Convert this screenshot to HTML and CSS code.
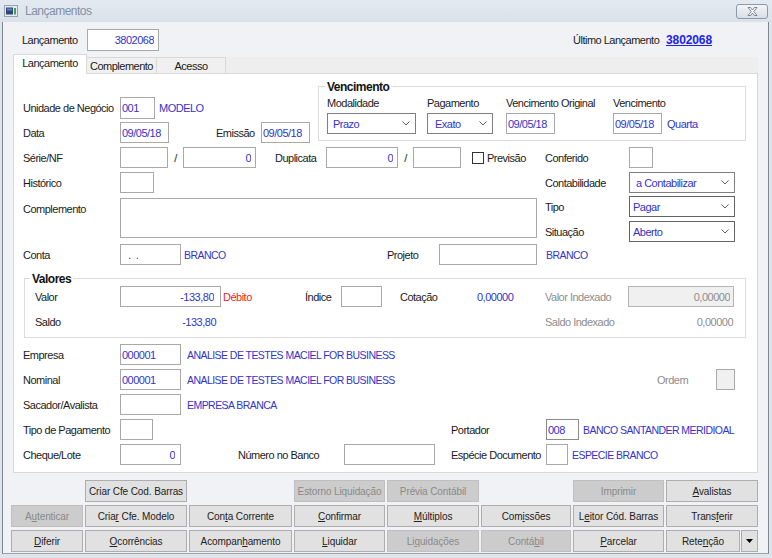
FILE: index.html
```html
<!DOCTYPE html>
<html lang="pt-BR">
<head>
<meta charset="utf-8">
<title>Lançamentos</title>
<link rel="stylesheet" href="styles.css">
</head>
<body>
<div class="window">
  <div class="titlebar">
    <svg class="app-icon" width="14" height="12" viewBox="0 0 14 12"><rect x="0.5" y="0.5" width="13" height="11" fill="#e6ebf1" stroke="#97a1ad"/><rect x="2" y="2.5" width="7" height="7" fill="#2b4677"/><rect x="3" y="3.5" width="5" height="2" fill="#6c86b0"/><rect x="10" y="3" width="2" height="6.5" fill="#3c9f63"/></svg>
    <span class="title">Lançamentos</span>
    <button class="close-btn" type="button"><svg width="11" height="9" viewBox="0 0 11 9"><path d="M1 0.5H3.6L5.5 3.1L7.4 0.5H10L6.8 4.5L10 8.5H7.4L5.5 5.9L3.6 8.5H1L4.2 4.5Z" fill="#fff" stroke="#5f6b7a" stroke-width="0.8"/></svg></button>
  </div>
  <div class="client">
    <div class="header">
      <span class="hdr-label">Lançamento</span>
      <input class="fld num w72 h22" type="text" value="3802068">
      <span class="last-label">Último Lançamento</span>
      <a class="last-link" href="#">3802068</a>
    </div>
    <div class="tabs">
      <div class="tab active">Lançamento</div>
      <div class="tab">Complemento</div>
      <div class="tab">Acesso</div>
      <div class="tab-fill"></div>
    </div>
    <div class="panel">
      <div class="top">
        <div class="top-left">
          <div class="row first">
            <span class="lbl">Unidade de Negócio</span>
            <input class="fld w35 h22" type="text" value="001">
            <span class="val ml4">MODELO</span>
          </div>
          <div class="row mt3">
            <span class="lbl">Data</span>
            <input class="fld w49" type="text" value="09/05/18">
            <span class="lbl-emissao">Emissão</span>
            <input class="fld w49" type="text" value="09/05/18">
          </div>
        </div>
        <div class="group venc">
          <div class="legend">Vencimento</div>
          <div class="venc-grid">
            <span>Modalidade</span>
            <span>Pagamento</span>
            <span>Vencimento Original</span>
            <span>Vencimento</span>
            <div class="combo w89 pl5"><span>Prazo</span><svg class="chev" width="8" height="5" viewBox="0 0 8 5"><path d="M0.5 0.5L4 4L7.5 0.5" fill="none" stroke="#606060"/></svg></div>
            <div class="combo w66 pl7"><span>Exato</span><svg class="chev" width="8" height="5" viewBox="0 0 8 5"><path d="M0.5 0.5L4 4L7.5 0.5" fill="none" stroke="#606060"/></svg></div>
            <input class="fld w49" type="text" value="09/05/18">
            <div class="venc-last"><input class="fld w49" type="text" value="09/05/18"><span class="val">Quarta</span></div>
          </div>
        </div>
      </div>

      <div class="mid">
        <div class="mid-left">
          <div class="row">
            <span class="lbl">Série/NF</span>
            <input class="fld w48" type="text" value="">
            <span class="slash">/</span>
            <input class="fld num w73" type="text" value="0">
            <span class="lbl-dup">Duplicata</span>
            <input class="fld num w72" type="text" value="0">
            <span class="slash">/</span>
            <input class="fld w48" type="text" value="">
            <span class="check"></span>
            <span class="check-lbl">Previsão</span>
          </div>
          <div class="row mt4">
            <span class="lbl">Histórico</span>
            <input class="fld w34" type="text" value="">
          </div>
          <div class="row-tall">
            <span class="lbl lbl-top">Complemento</span>
            <textarea class="memo"></textarea>
          </div>
        </div>
        <div class="mid-right">
          <div class="row">
            <span class="lbl-r">Conferido</span>
            <input class="fld w24" type="text" value="">
          </div>
          <div class="row mt4">
            <span class="lbl-r">Contabilidade</span>
            <div class="combo w106 pl6"><span>a Contabilizar</span><svg class="chev" width="8" height="5" viewBox="0 0 8 5"><path d="M0.5 0.5L4 4L7.5 0.5" fill="none" stroke="#606060"/></svg></div>
          </div>
          <div class="row mt3">
            <span class="lbl-r">Tipo</span>
            <div class="combo dark w106 pl3"><span>Pagar</span><svg class="chev" width="8" height="5" viewBox="0 0 8 5"><path d="M0.5 0.5L4 4L7.5 0.5" fill="none" stroke="#606060"/></svg></div>
          </div>
          <div class="row mt4">
            <span class="lbl-r">Situação</span>
            <div class="combo dark w106 pl3"><span>Aberto</span><svg class="chev" width="8" height="5" viewBox="0 0 8 5"><path d="M0.5 0.5L4 4L7.5 0.5" fill="none" stroke="#606060"/></svg></div>
          </div>
        </div>
      </div>

      <div class="row conta">
        <span class="lbl">Conta</span>
        <input class="fld w61 pad-dots" type="text" value=".  .">
        <span class="val caps conta-desc">BRANCO</span>
        <span class="lbl-proj">Projeto</span>
        <input class="fld w98" type="text" value="">
        <span class="val caps ml9">BRANCO</span>
      </div>

      <div class="group valores">
        <div class="legend">Valores</div>
        <div class="row vrow">
          <span class="lbl-v">Valor</span>
          <input class="fld num pr6 w101" type="text" value="-133,80">
          <span class="debito">Débito</span>
          <span class="lbl-ind">Índice</span>
          <input class="fld w41" type="text" value="">
          <span class="lbl-cot">Cotação</span>
          <span class="val cot-val">0,00000</span>
          <span class="dim lbl-vi">Valor Indexado</span>
          <input class="fld num dis w106" type="text" value="0,00000" disabled>
        </div>
        <div class="row vrow mt4">
          <span class="lbl-v">Saldo</span>
          <span class="val saldo-val">-133,80</span>
          <span class="dim lbl-si">Saldo Indexado</span>
          <span class="dim saldo-ind">0,00000</span>
        </div>
      </div>

      <div class="row mt6">
        <span class="lbl">Empresa</span>
        <input class="fld w61" type="text" value="000001">
        <span class="val caps ml6">ANALISE DE TESTES MACIEL FOR BUSINESS</span>
      </div>
      <div class="row mt4">
        <span class="lbl">Nominal</span>
        <input class="fld w61" type="text" value="000001">
        <span class="val caps ml6 nom-desc">ANALISE DE TESTES MACIEL FOR BUSINESS</span>
        <span class="dim lbl-ordem">Ordem</span>
        <span class="ordem-box"></span>
      </div>
      <div class="row mt4">
        <span class="lbl">Sacador/Avalista</span>
        <input class="fld w61" type="text" value="">
        <span class="val caps ml6">EMPRESA BRANCA</span>
      </div>
      <div class="row mt4">
        <span class="lbl">Tipo de Pagamento</span>
        <input class="fld w33" type="text" value="">
        <span class="lbl-port">Portador</span>
        <input class="fld w33 darkb" type="text" value="008">
        <span class="val caps ml4">BANCO SANTANDER MERIDIOAL</span>
      </div>
      <div class="row mt4">
        <span class="lbl">Cheque/Lote</span>
        <input class="fld num pr5 w61" type="text" value="0">
        <span class="lbl-nb">Número no Banco</span>
        <input class="fld w91" type="text" value="">
        <span class="lbl-esp">Espécie Documento</span>
        <input class="fld w22" type="text" value="">
        <span class="val caps ml4">ESPECIE BRANCO</span>
      </div>
    </div>

    <div class="buttons">
      <span></span>
      <button class="btn" type="button">Criar Cfe Cod. Barras</button>
      <span></span>
      <button class="btn" type="button" disabled>Estorno Liquidação</button>
      <button class="btn" type="button" disabled>Prévia Contábil</button>
      <span></span>
      <button class="btn" type="button" disabled>Imprimir</button>
      <button class="btn" type="button"><u>A</u>valistas</button>

      <button class="btn" type="button" disabled>A<u>u</u>tenticar</button>
      <button class="btn" type="button">Cria<u>r</u> Cfe. Modelo</button>
      <button class="btn" type="button">Con<u>t</u>a Corrente</button>
      <button class="btn" type="button"><u>C</u>onfirmar</button>
      <button class="btn" type="button"><u>M</u>últiplos</button>
      <button class="btn" type="button">Com<u>i</u>ssões</button>
      <button class="btn" type="button">L<u>e</u>itor Cód. Barras</button>
      <button class="btn" type="button">Trans<u>f</u>erir</button>

      <button class="btn" type="button"><u>D</u>iferir</button>
      <button class="btn" type="button"><u>O</u>corrências</button>
      <button class="btn" type="button">Acompan<u>h</u>amento</button>
      <button class="btn" type="button"><u>L</u>iquidar</button>
      <button class="btn" type="button" disabled>Li<u>q</u>uidações</button>
      <button class="btn" type="button" disabled>Contá<u>b</u>il</button>
      <button class="btn" type="button"><u>P</u>arcelar</button>
      <div class="split">
        <button class="btn ret" type="button">Rete<u>n</u>ção</button>
        <button class="btn arrow" type="button"><svg width="7" height="4" viewBox="0 0 7 4"><path d="M0 0H7L3.5 4Z" fill="#000"/></svg></button>
      </div>
    </div>
  </div>
</div>
</body>
</html>
```
FILE: styles.css
```css
* { box-sizing: border-box; }
html, body { margin: 0; padding: 0; }
body {
  width: 772px; height: 558px; overflow: hidden;
  font-family: "Liberation Sans", Arial, sans-serif;
  font-size: 11px; letter-spacing: -0.5px; color: #1b1b1b;
  background: #dfe5ec;
}
.window { width: 772px; height: 558px; display: flex; flex-direction: column; background: #dfe5ec; }

/* title bar */
.titlebar {
  height: 22px; flex: none; display: flex; align-items: center;
  padding-left: 4px;
  background: linear-gradient(#e3e9f0, #dae1ea);
}
.app-icon { display: block; }
.title { margin-left: 7px; font-size: 12px; color: #8291a5; }
.close-btn {
  margin-left: auto; margin-right: 4px; width: 32px; height: 15px; padding: 0;
  border: 1px solid #8e99a7; border-radius: 3px;
  background: linear-gradient(#f2f5f8, #d8dfe7);
  display: flex; align-items: center; justify-content: center;
}
.close-btn svg { display: block; }

/* client */
.client {
  margin-left: 2px; width: 767px; height: 532px;
  background: #f1f2f5;
  border-left: 1px solid #7d8590; border-right: 1px solid #7d8590; border-bottom: 1px solid #9aa2ac;
}
.header { display: flex; align-items: center; height: 22px; margin-top: 7px; padding-left: 19px; }
.hdr-label { width: 65px; }
.last-label { margin-left: 414px; width: 93px; }
.last-link { font-weight: bold; font-size: 12px; letter-spacing: -0.1px; color: #2222ee; text-decoration: underline; }

/* tabs */
.tabs { display: flex; align-items: flex-end; height: 19px; margin: 3px 0 0 10px; width: 745px; }
.tab {
  height: 16px; display: flex; align-items: center; justify-content: center;
  background: #f0f0f0; border-top: 1px solid #d9d9d9; border-right: 1px solid #d9d9d9;
  color: #1b1b1b;
}
.tab:nth-child(2) { width: 70px; }
.tab:nth-child(3) { width: 69px; }
.tab.active {
  width: 74px; height: 20px; margin-bottom: -1px; position: relative; z-index: 1;
  background: #fff; border-left: 1px solid #d9d9d9; align-items: flex-start; padding-top: 2px;
}
.tab-fill { flex: 1; height: 16px; background: #eeeeee; }

/* panel */
.panel {
  margin-left: 10px; width: 745px; height: 400px;
  background: #fff; border: 1px solid #d9d9d9; padding-left: 9px;
}
.row { display: flex; align-items: center; height: 21px; }
.mt3 { margin-top: 3px; }
.mt4 { margin-top: 4px; }
.mt6 { margin-top: 6px; }
.ml4 { margin-left: 4px; }
.ml6 { margin-left: 6px; }
.ml9 { margin-left: 9px; }
.lbl { width: 97px; flex: none; }

.fld {
  height: 21px; flex: none; border: 1px solid #a9a9a9; background: #fff;
  padding: 0 1px; margin: 0;
  font-family: "Liberation Sans", Arial, sans-serif; font-size: 11px; letter-spacing: -0.5px;
  color: #3333cc; outline: none;
}
.h22 { height: 22px; }
.num { text-align: right; padding-right: 4px; }
.pr5 { padding-right: 5px; }
.pr6 { padding-right: 6px; }
.dis { background: #f0f0f0; border-color: #b4b4b4; color: #8d8d8d; padding-right: 3px; }
.darkb { border-color: #8c8c8c; }
.pad-dots { padding-left: 7px; }
.w22 { width: 22px; } .w24 { width: 24px; } .w33 { width: 33px; } .w34 { width: 34px; }
.w35 { width: 35px; } .w41 { width: 41px; } .w48 { width: 48px; } .w49 { width: 49px; }
.w61 { width: 61px; } .w66 { width: 66px; } .w72 { width: 72px; } .w73 { width: 73px; }
.w89 { width: 89px; } .w91 { width: 91px; } .w98 { width: 98px; } .w101 { width: 101px; }
.w106 { width: 106px; }

.val { color: #3333cc; }
.caps { font-size: 10.5px; letter-spacing: -0.55px; }
.dim { color: #8d8d8d; }

/* combos */
.combo {
  height: 21px; flex: none; display: flex; align-items: center;
  border: 1px solid #7f7f7f; background: #fff; color: #3333cc;
}
.combo.dark { border-color: #646464; }
.pl3 { padding-left: 3px; } .pl5 { padding-left: 5px; } .pl6 { padding-left: 6px; } .pl7 { padding-left: 7px; }
.chev { margin-left: auto; margin-right: 5px; display: block; }

/* top section */
.top { display: flex; margin-top: 12px; }
.top-left { width: 295px; flex: none; }
.top-left .first { margin-top: 11px; height: 22px; }
.lbl-emissao { margin-left: 47px; width: 45px; }

.group { border: 1px solid #dcdcdc; background: #fff; }
.legend {
  display: table; margin: -7px 0 0 6px; padding: 0 2px; line-height: 14px;
  background: #fff; font-weight: bold; font-size: 12px; color: #111;
}
.venc { width: 428px; height: 55px; flex: none; }
.venc-grid {
  display: grid; grid-template-columns: 100px 79px 107px auto;
  grid-template-rows: 14px 21px; row-gap: 3px; margin: 2px 0 0 8px;
}
.venc-grid > span { line-height: 14px; }
.venc-last { display: flex; align-items: center; gap: 5px; }

/* middle */
.mid { display: flex; margin-top: 4px; }
.mid-left { width: 522px; flex: none; }
.mid-right { flex: 1; }
.slash { width: 15px; flex: none; text-align: center; }
.lbl-dup { margin-left: 19px; width: 51px; flex: none; }
.check { width: 12px; height: 12px; margin-left: 11px; border: 1px solid #333; background: #fff; flex: none; }
.check-lbl { margin-left: 3px; }
.row-tall { display: flex; align-items: flex-start; margin-top: 5px; }
.lbl-top { padding-top: 5px; line-height: 13px; }
.memo {
  width: 417px; height: 40px; margin: 0; resize: none; border: 1px solid #a9a9a9;
  font-family: "Liberation Sans", Arial, sans-serif; font-size: 11px;
}
.lbl-r { width: 84px; flex: none; }

/* conta */
.conta { margin-top: 2px; }
.conta-desc { margin-left: 3px; width: 203px; flex: none; }
.lbl-proj { width: 52px; flex: none; }

/* valores */
.valores { width: 722px; height: 60px; margin: 13px 0 0 1px; }
.valores .legend { margin-left: 5px; }
.vrow { padding-left: 10px; }
.lbl-v { width: 85px; flex: none; }
.debito { color: #ee1c25; margin-left: 2px; width: 82px; flex: none; }
.lbl-ind { width: 36px; flex: none; }
.lbl-cot { margin-left: 18px; width: 77px; flex: none; }
.cot-val { width: 68px; flex: none; }
.lbl-vi { width: 83px; flex: none; }
.saldo-val { width: 96px; text-align: right; flex: none; }
.lbl-si { margin-left: 329px; width: 83px; flex: none; }
.saldo-ind { width: 105px; text-align: right; flex: none; }

/* lower */
.nom-desc { width: 470px; flex: none; }
.lbl-ordem { width: 59px; flex: none; }
.ordem-box { width: 19px; height: 21px; background: #f0f0f0; border: 1px solid #a9a9a9; flex: none; }
.lbl-port { margin-left: 298px; width: 95px; flex: none; }
.lbl-nb { margin-left: 57px; width: 106px; flex: none; }
.lbl-esp { margin-left: 16px; width: 95px; flex: none; }

/* buttons */
.buttons {
  display: grid;
  grid-template-columns: 72px 102px 103px 91px 92px 90px 91px 92px;
  grid-auto-rows: 22px; column-gap: 2px; row-gap: 3px;
  margin: 7px 0 0 8px;
}
.btn {
  margin: 0; padding: 0; height: 22px;
  font-family: "Liberation Sans", Arial, sans-serif; font-size: 10px; letter-spacing: -0.1px;
  color: #222; background: #e1e1e1; border: 1px solid #adadad;
}
.btn:disabled { background: #cccccc; border-color: #bfbfbf; color: #8a8a8a; }
.split { display: flex; gap: 1px; }
.ret { width: 74px; }
.arrow { width: 17px; display: flex; align-items: center; justify-content: center; }
.arrow svg { display: block; }
```
